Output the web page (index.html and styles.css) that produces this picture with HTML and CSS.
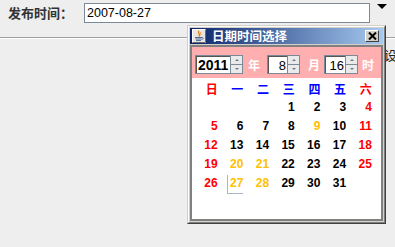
FILE: index.html
```html
<!DOCTYPE html>
<html>
<head>
<meta charset="utf-8">
<link rel="stylesheet" href="styles.css">
</head>
<body>
<div class="top">
  <span class="lbl">发布时间：</span>
  <div class="field">2007-08-27</div>
  <span class="drop"></span>
</div>
<div class="sep"></div>
<div class="row2"><span class="behind">设</span></div>

<div class="win">
  <div class="win-inner">
    <div class="titlebar">
      <span class="appicon">
        <svg width="14" height="14" viewBox="0 0 14 14">
          <rect x="0.5" y="0.5" width="13" height="13" fill="#e8e6e0" stroke="#ffffff"/>
          <path d="M13.5 0.5 V13.5 H0.5" fill="none" stroke="#6a6a6a"/>
          <path d="M7 2 C5 4 9 5 7 7.5" fill="none" stroke="#e87818" stroke-width="1.4"/>
          <path d="M8.8 3 C7.8 4.5 9.5 5.2 8.6 6.6" fill="none" stroke="#f0a040" stroke-width="1"/>
          <path d="M3 8.5 H10 M3.5 10 H9.5 M4 11.6 H9" stroke="#4a6a9a" stroke-width="1"/>
          <path d="M10 8.5 C11.8 8.5 11.8 10.5 9.7 10.3" fill="none" stroke="#4a6a9a" stroke-width="0.9"/>
        </svg>
      </span>
      <span class="title">日期时间选择</span>
      <span class="close">
        <svg width="9" height="8" viewBox="0 0 9 8"><path d="M1 0.5 L8 7.5 M8 0.5 L1 7.5" stroke="#000" stroke-width="2"/></svg>
      </span>
    </div>
    <div class="content">
      <div class="pink">
        <div class="spin spin-year">
          <div class="sf bold">2011</div>
          <div class="sb"><span class="up"></span><span class="dn"></span></div>
        </div>
        <span class="unit u1">年</span>
        <div class="spin spin-month">
          <div class="sf right">8</div>
          <div class="sb"><span class="up"></span><span class="dn"></span></div>
        </div>
        <span class="unit u2">月</span>
        <div class="spin spin-day">
          <div class="sf right">16</div>
          <div class="sb"><span class="up"></span><span class="dn"></span></div>
        </div>
        <span class="unit u3">时</span>
      </div>
      <div class="cal">
        <div class="hd red">日</div><div class="hd blue">一</div><div class="hd blue">二</div><div class="hd blue">三</div><div class="hd blue">四</div><div class="hd blue">五</div><div class="hd red">六</div>
        <div></div><div></div><div></div><div class="d">1</div><div class="d">2</div><div class="d">3</div><div class="d red">4</div>
        <div class="d red">5</div><div class="d">6</div><div class="d">7</div><div class="d">8</div><div class="d org">9</div><div class="d">10</div><div class="d red">11</div>
        <div class="d red">12</div><div class="d">13</div><div class="d">14</div><div class="d">15</div><div class="d">16</div><div class="d">17</div><div class="d red">18</div>
        <div class="d red">19</div><div class="d org">20</div><div class="d org">21</div><div class="d">22</div><div class="d">23</div><div class="d">24</div><div class="d red">25</div>
        <div class="d red">26</div><div class="d org"><span class="sel">27</span></div><div class="d org">28</div><div class="d">29</div><div class="d">30</div><div class="d">31</div><div></div>
      </div>
    </div>
  </div>
</div>
</body>
</html>
```

FILE: styles.css
```css
html, body {
  margin: 0;
  padding: 0;
}
body {
  width: 395px;
  height: 247px;
  overflow: hidden;
  background: #eeeeee;
  position: relative;
  font-family: "Liberation Sans", Arial, sans-serif;
}
.top {
  display: flex;
  align-items: flex-start;
  height: 37px;
  box-sizing: border-box;
  padding-top: 3px;
}
.lbl {
  margin-left: 8px;
  width: 76px;
  font-family: "Noto Sans CJK SC", sans-serif;
  font-weight: bold;
  font-size: 13px;
  line-height: 20px;
  color: #333333;
}
.field {
  width: 286px;
  height: 20px;
  box-sizing: border-box;
  border: 1px solid #7a8a99;
  background: #ffffff;
  font-size: 12.5px;
  line-height: 18px;
  padding-left: 2px;
  color: #000;
}
.drop {
  margin-left: 7px;
  margin-top: 1px;
  width: 0;
  height: 0;
  border-left: 5px solid transparent;
  border-right: 5px solid transparent;
  border-top: 5px solid #000;
}
.sep {
  height: 1px;
  background: #a0a0a0;
  border-bottom: 1px solid #ffffff;
}
.row2 {
  padding: 6px 0 0 384px;
}
.behind {
  font-family: "Noto Sans CJK SC", sans-serif;
  font-size: 13px;
  color: #222;
}
.win {
  position: absolute;
  left: 187px;
  top: 25px;
  width: 199px;
  height: 199px;
  box-sizing: border-box;
  border: 1px solid;
  border-color: #d4d0c8 #404040 #404040 #d4d0c8;
  background: #d4d0c8;
}
.win-inner {
  height: 100%;
  box-sizing: border-box;
  border: 1px solid;
  border-color: #ffffff #808080 #808080 #ffffff;
  padding: 1px;
  display: flex;
  flex-direction: column;
}
.titlebar {
  height: 16px;
  flex: none;
  display: flex;
  align-items: center;
  background: linear-gradient(to right, #0a246a, #a6caf0);
}
.appicon {
  width: 14px;
  height: 14px;
  margin-left: 2px;
  display: flex;
}
.title {
  margin-left: 6px;
  font-family: "Noto Sans CJK SC", sans-serif;
  font-weight: bold;
  font-size: 12.5px;
  line-height: 16px;
  color: #ffffff;
  flex: 1;
}
.close {
  width: 14px;
  height: 12px;
  box-sizing: border-box;
  margin-right: 4px;
  background: #d4d0c8;
  border: 1px solid;
  border-color: #ffffff #404040 #404040 #ffffff;
  display: flex;
  align-items: center;
  justify-content: center;
}
.content {
  margin-top: 1px;
  flex: 1;
  border: 2px solid #808080;
  display: flex;
  flex-direction: column;
  background: #ffffff;
}
.pink {
  background: #ffafaf;
  height: 31px;
  box-sizing: border-box;
  padding: 8px 0 0 3px;
  display: flex;
  align-items: flex-start;
}
.spin {
  display: flex;
  height: 19px;
  box-sizing: border-box;
  border: 1px solid #7a8a99;
  background: #ffffff;
}
.spin-year { width: 48px; }
.spin-month { width: 33px; }
.spin-day { width: 34px; }
.sf {
  flex: 1;
  font-size: 13px;
  line-height: 17px;
  color: #000;
  padding: 0 1px;
  border-top: 1px solid #555;
  border-left: 1px solid #555;
  box-sizing: border-box;
}
.sf.bold { font-weight: bold; font-size: 14px; }
.sf.right { text-align: right; }
.sb {
  width: 11px;
  flex: none;
  display: flex;
  flex-direction: column;
  border-left: 1px solid #7a8a99;
  background: #eaeaea;
}
.sb span {
  flex: 1;
  display: flex;
  align-items: center;
  justify-content: center;
  position: relative;
}
.sb .up { border-bottom: 1px solid #7a8a99; }
.sb .up::after {
  content: "";
  border-left: 2px solid transparent;
  border-right: 2px solid transparent;
  border-bottom: 2px solid #6a7a8a;
}
.sb .dn::after {
  content: "";
  border-left: 2px solid transparent;
  border-right: 2px solid transparent;
  border-top: 2px solid #6a7a8a;
}
.unit {
  font-family: "Noto Sans CJK SC", sans-serif;
  font-weight: bold;
  font-size: 12px;
  line-height: 19px;
  color: #ffffff;
}
.u1 { margin: 0 7px 0 5px; }
.u2 { margin: 0 4px 0 8px; }
.u3 { margin: 0 0 0 4px; }
.cal {
  display: grid;
  grid-template-columns: repeat(7, 25.7px);
  grid-auto-rows: 19px;
  padding-top: 1px;
}
.cal > div {
  text-align: right;
  line-height: 19px;
  font-size: 12px;
  font-weight: bold;
  color: #000;
}
.cal .hd {
  font-family: "Noto Sans CJK SC", sans-serif;
  font-size: 12px;
}
.cal .red { color: #ff0000; }
.cal .blue { color: #0000ff; }
.cal .org { color: #ffc000; }
.sel {
  display: inline-block;
  height: 19px;
  box-sizing: border-box;
  margin-top: 1px;
  vertical-align: top;
  line-height: 17px;
  padding-left: 2px;
  border-left: 1px solid #a8b8cc;
  border-bottom: 1px solid #a8b8cc;
}
```
